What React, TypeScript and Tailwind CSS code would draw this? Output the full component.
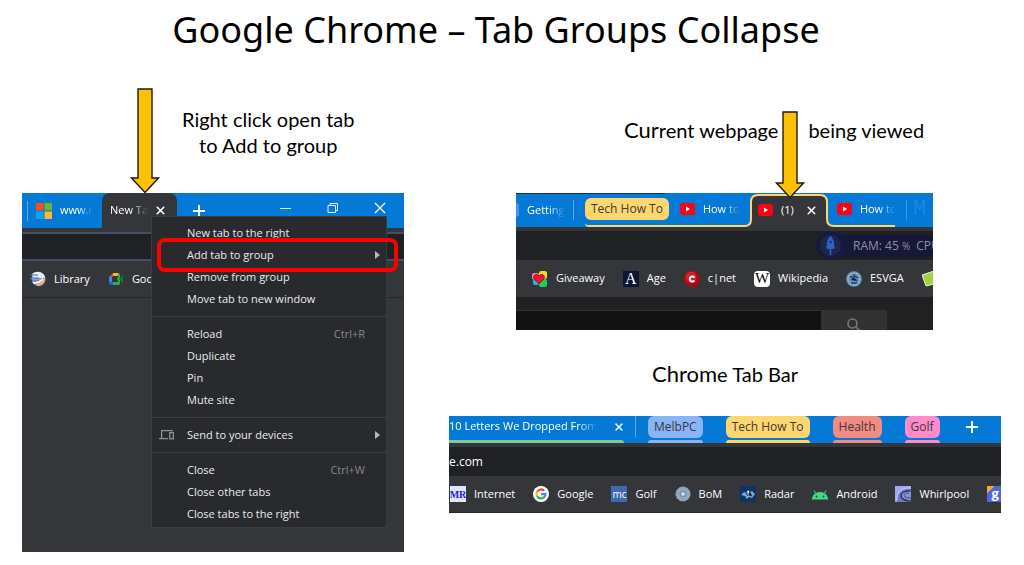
import type { ReactNode } from 'react';
import { X } from 'lucide-react';

const SHORTCUTS: Record<string, string> = { Reload: 'Ctrl+R', Close: 'Ctrl+W' };

const MENU_GROUPS = [
  ['New tab to the right', 'Add tab to group', 'Remove from group', 'Move tab to new window'],
  ['Reload', 'Duplicate', 'Pin', 'Mute site'],
  ['Send to your devices'],
  ['Close', 'Close other tabs', 'Close tabs to the right'],
];

const SUBMENUS = ['Add tab to group', 'Send to your devices'];

function DownArrow({ height, className }: { height: number; className?: string }) {
  const neck = height - 16;
  return (
    <svg width="30" height={height} className={`relative z-10 shrink-0 ${className ?? ''}`} aria-hidden="true">
      <path
        d={`M8 1H22V${neck}H28.5L15 ${height - 1.5}L1.5 ${neck}H8Z`}
        fill="#ffc000"
        stroke="#1c1a10"
        strokeWidth="1.4"
      />
    </svg>
  );
}

function YouTubeIcon() {
  return (
    <svg width="15" height="12" viewBox="0 0 15 12" className="shrink-0" aria-hidden="true">
      <rect width="15" height="12" rx="3" fill="#ff0014" />
      <path d="M6 3.6L10 6L6 8.4Z" fill="#fff" />
    </svg>
  );
}

function WindowsLogo() {
  return (
    <svg width="16" height="16" className="shrink-0" aria-hidden="true">
      <path d="M0 0h7.5v7.5H0z" fill="#f25022" />
      <path d="M8.5 0H16v7.5H8.5z" fill="#6cb52c" />
      <path d="M0 8.500h7.500V16H0z" fill="#10a5ef" />
      <path d="M8.500 8.500H16V16H8.500z" fill="#ffb82e" />
    </svg>
  );
}

function PlusIcon() {
  return (
    <svg width="12" height="12" aria-hidden="true">
      <path d="M6 0V12M0 6H12" stroke="#fff" strokeWidth="2" />
    </svg>
  );
}

function LibraryIcon() {
  return (
    <svg width="16" height="16" aria-hidden="true">
      <circle cx="8.500" cy="8" r="7" fill="#8fa0c2" />
      <path d="M2 3Q5 0 10 1Q15 3 15 7H3Z" fill="#e6edf8" />
      <path d="M0 4H8M0 7H9M2 10H9" stroke="#3d75c9" strokeWidth="1.200" />
      <path d="M7 13C10 12 13 9 15 6C16 11 12 16 7 15Z" fill="#e2ad80" />
      <path d="M3 11.500Q8 13 13 8" fill="none" stroke="#fff" strokeWidth="1.600" />
    </svg>
  );
}

function MeetIcon() {
  return (
    <svg width="16" height="16" aria-hidden="true">
      <path d="M1 6L5 2V6Z" fill="#ea4335" />
      <path d="M5 2H11V5H5Z" fill="#fbbc04" />
      <path d="M1 6H4V11H1Z" fill="#4285f4" />
      <path d="M1 11H5V14H3Q1 14 1 12Z" fill="#1967d2" />
      <path d="M5 11H11V14H5Z" fill="#34a853" />
      <path d="M10 2Q12 2 12 4V12Q12 14 10 14V10L9 8L10 6Z" fill="#34a853" />
      <path d="M11 8L15 4V12Z" fill="#00832d" />
    </svg>
  );
}

function GiveawayIcon() {
  return (
    <svg width="16" height="16" aria-hidden="true">
      <rect x="7" y="0" width="8" height="8" rx="2" fill="#fbd12c" />
      <rect x="0" y="2" width="7" height="7" rx="2" fill="#ff7c9c" />
      <rect x="1" y="8" width="6" height="6" rx="2" fill="#27b6d8" />
      <rect x="7" y="8" width="8" height="8" rx="2" fill="#1bd05a" />
      <path d="M7 13L2 8C0 4 5 2 7 5C9 2 14 4 12 8Z" fill="#f5102d" stroke="#4c2512" strokeWidth=".7" />
    </svg>
  );
}

function CnetIcon() {
  return (
    <svg width="16" height="16" aria-hidden="true">
      <circle cx="8" cy="8" r="8" fill="#a70c17" />
      <circle cx="7" cy="6" r="5.500" fill="#dd1d29" />
      <path d="M10.500 6.500A2.600 2.600 0 1 0 10.500 9.500" fill="none" stroke="#fff" strokeWidth="2" />
    </svg>
  );
}

function EsvgaIcon() {
  return (
    <svg width="16" height="16" aria-hidden="true">
      <circle cx="8" cy="8" r="7.800" fill="#7196bd" />
      <circle cx="8" cy="8" r="6" fill="none" stroke="#c0d4e6" strokeWidth="1" strokeDasharray="1.500 1.500" />
      <path d="M4 6H7M9 5L12 7M5 9L8 7L11 10M5 12H11M8 3V8" stroke="#183d6b" strokeWidth="1.400" />
    </svg>
  );
}

function GoogleIcon() {
  return (
    <svg width="16" height="16" aria-hidden="true">
      <circle cx="8" cy="8" r="8" fill="#fff" />
      <g fill="none" strokeWidth="2.200">
        <path d="M11.200 4.800A4.500 4.500 0 0 0 4.100 5.750" stroke="#ea4335" />
        <path d="M4.100 5.750A4.500 4.500 0 0 0 4.100 10.250" stroke="#fbbc04" />
        <path d="M4.100 10.250A4.500 4.500 0 0 0 10.900 11.400" stroke="#34a853" />
        <path d="M10.900 11.400A4.500 4.500 0 0 0 12.500 8.200H8" stroke="#4285f4" />
      </g>
    </svg>
  );
}

function BomIcon() {
  return (
    <svg width="16" height="16" aria-hidden="true">
      <circle cx="8" cy="8" r="7" fill="#8fa8bf" />
      <circle cx="8" cy="8" r="7" fill="none" stroke="#a4b7c8" strokeWidth="1" strokeDasharray="3 1" />
      <circle cx="8" cy="8" r="3" fill="#a9bac8" stroke="#70899f" />
      <circle cx="8" cy="8" r="1" fill="#f2f5f7" />
    </svg>
  );
}

function RadarIcon() {
  return (
    <svg width="16" height="16" aria-hidden="true">
      <rect width="16" height="16" fill="#0b3562" />
      <path d="M1 9L4 6L6 7L8 4L10 6L12 5L15 8L12 12L9 11L7 13L5 10Z" fill="#7dabcf" />
      <path d="M6 7L8 10M10 6L9 9L12 10" stroke="#0b3562" />
      <path d="M7 5L9 5L9 7Z" fill="#fff" />
    </svg>
  );
}

function AndroidIcon() {
  return (
    <svg width="16" height="16" aria-hidden="true">
      <path d="M3.500 7L2 4.500M12.500 7L14 4.500" stroke="#3ddc84" strokeWidth="1" />
      <path d="M0 13.500C0 9 3.500 6 8 6S16 9 16 13.500Z" fill="#3ddc84" />
      <circle cx="4.500" cy="10.500" r=".9" fill="#35363a" />
      <circle cx="11.500" cy="10.500" r=".9" fill="#35363a" />
    </svg>
  );
}

function WhirlpoolIcon() {
  return (
    <svg width="16" height="16" aria-hidden="true">
      <rect width="16" height="16" fill="#a3a8e6" />
      <path d="M16 3C8 2 2 6 2 16H16Z" fill="#6f77c2" />
      <path d="M16 5C9 4 4 8 7 12C9 14 12 15 16 15" fill="#8a91d4" stroke="#22295f" strokeWidth="1.200" />
      <path d="M14 7C10 7 8 9 10 11C12 12 14 12 16 12" fill="none" stroke="#3c448c" />
      <path d="M2 14C1 6 8 1 16 2" fill="none" stroke="#c5c9fb" />
    </svg>
  );
}

function LetterIcon({ children, className }: { children: ReactNode; className: string }) {
  return (
    <span className={`flex h-4 w-4 shrink-0 items-center justify-center overflow-hidden ${className}`}>
      {children}
    </span>
  );
}

function Bookmark({ icon, label }: { icon: ReactNode; label?: string }) {
  return (
    <a href="#" className="flex shrink-0 items-center gap-2 whitespace-nowrap">
      <span className="shrink-0">{icon}</span>
      {label}
    </a>
  );
}

function GroupChip({ label, className }: { label: string; className: string }) {
  return (
    <button className={`h-[22px] shrink-0 rounded-md px-[6px] text-[12px] whitespace-nowrap text-[#3c3a35] ${className}`}>
      {label}
    </button>
  );
}

function FadedLabel({ children }: { children: ReactNode }) {
  return (
    <span className="overflow-hidden whitespace-nowrap [mask-image:linear-gradient(to_right,black_55%,transparent)]">
      {children}
    </span>
  );
}

function ContextMenu() {
  return (
    <div
      role="menu"
      className="absolute top-[23px] right-[17px] left-[129px] border border-[#3b3c40] bg-[#292a2d] pt-[5px] pb-[2px]"
    >
      {MENU_GROUPS.map((group, i) => (
        <div key={group[0]} className={i > 0 ? 'mt-[6px] border-t border-[#3e3f43] pt-[6px]' : ''}>
          {group.map((item) => (
            <button
              key={item}
              role="menuitem"
              className="flex h-[22px] w-full items-center pr-[5px] pl-[7px] text-left text-[#e8eaed]"
            >
              <span className="w-[28px] shrink-0">
                {item === 'Send to your devices' && (
                  <svg width="16" height="12" fill="none" stroke="#8e9196" strokeWidth="1.300" aria-hidden="true">
                    <path d="M14 1.600H2.600V9M0 9.700H9" />
                    <rect x="10.700" y="3.600" width="3.600" height="6.200" />
                  </svg>
                )}
              </span>
              <span className="grow">{item}</span>
              {SHORTCUTS[item] && <span className="mr-4 text-[#85888c]">{SHORTCUTS[item]}</span>}
              {SUBMENUS.includes(item) && (
                <svg width="6" height="8" aria-hidden="true">
                  <path d="M0 0L5 4L0 8Z" fill="#b4b7bb" />
                </svg>
              )}
            </button>
          ))}
        </div>
      ))}
    </div>
  );
}

function MenuWindow() {
  return (
    <section className="relative overflow-hidden bg-[#35363a]">
      <div className="flex h-[35px] items-center bg-[#0479d6] text-white">
        <span className="ml-[5px] h-5 w-px shrink-0 bg-[#5ea8e4]" />
        <button className="flex w-[74px] shrink-0 items-center gap-2 px-2">
          <WindowsLogo />
          <FadedLabel>www.r</FadedLabel>
        </button>
        <div className="flex h-full w-[75px] shrink-0 items-center justify-between rounded-t-lg bg-[#35363a] pr-[10px] pl-2">
          <button className="flex w-[40px]">
            <FadedLabel>New Ta</FadedLabel>
          </button>
          <button aria-label="Close tab">
            <X size={13} strokeWidth={3} />
          </button>
        </div>
        <button className="ml-4" aria-label="New tab">
          <PlusIcon />
        </button>
        <div className="ml-auto flex items-center gap-[35px] pr-[18px] pb-[5px]">
          <button aria-label="Minimise">
            <svg width="12" height="12">
              <path d="M0 6.500H11" stroke="#d8ebf9" />
            </svg>
          </button>
          <button aria-label="Restore">
            <svg width="12" height="12" fill="none" stroke="#e8f4fc">
              <path d="M1 3.500H8.500V10.500H1Z M3 3.500V1.500H10.500V8.500H8.500" />
            </svg>
          </button>
          <button aria-label="Close window">
            <svg width="12" height="12">
              <path d="M1 1L11 11M11 1L1 11" stroke="#fff" strokeWidth="1.200" />
            </svg>
          </button>
        </div>
      </div>
      <div className="mt-[4px] h-[29px] border-y-2 border-[#43506a] bg-[#202124]" />
      <div className="flex h-[37px] items-center gap-[18px] border-b border-[#27282b] pl-2 text-white">
        <Bookmark icon={<LibraryIcon />} label="Library" />
        <Bookmark icon={<MeetIcon />} label="Goo" />
      </div>
      <div className="h-[254px]" />
      <ContextMenu />
      <div className="pointer-events-none absolute top-[45px] right-[6px] left-[135px] h-[34px] rounded-lg border-4 border-[#ff0000]" />
    </section>
  );
}

function ActiveTab() {
  return (
    <div className="relative flex h-full w-[89px] shrink-0 items-center">
      <svg width="89" height="34" className="absolute inset-0" aria-hidden="true">
        <path
          d="M0 33Q6 33 6 26V9Q6 2 13 2H75Q82 2 82 9V26Q82 33 89 33V36H0Z"
          fill="#35363a"
        />
        <path
          d="M0 33Q6 33 6 26V9Q6 2 13 2H75Q82 2 82 9V26Q82 33 89 33"
          fill="none"
          stroke="#fdd66f"
          strokeWidth="2"
        />
      </svg>
      <button className="relative flex items-center gap-2 pl-[13px]">
        <YouTubeIcon />
        (1)
      </button>
      <button className="relative ml-[11px]" aria-label="Close tab">
        <X size={13} strokeWidth={3} />
      </button>
    </div>
  );
}

function GroupWindow() {
  return (
    <section className="mr-[68px] ml-[67px] overflow-hidden bg-[#35363a] text-white">
      <div className="relative flex h-[34px] items-center bg-[#0479d6]">
        <span className="absolute top-0 left-0 h-px w-[149px] bg-[#17324d]" />
        <span className="h-[14px] w-[3px] shrink-0 rounded-r-full bg-[#4d8df6]" />
        <button className="flex w-[54px] shrink-0 pr-[7px] pl-2">
          <FadedLabel>Getting</FadedLabel>
        </button>
        <span className="h-5 w-px shrink-0 bg-[#5ea8e4]" />
        <div className="ml-[11px] flex h-full shrink-0">
          <div className="flex items-center rounded-bl-sm border-b-2 border-[#fdd66f]">
            <GroupChip label="Tech How To" className="bg-[#fdd66f]" />
          </div>
          <button className="flex w-[76px] items-center gap-2 border-b-2 border-[#fdd66f] pr-[5px] pl-[11px]">
            <YouTubeIcon />
            <FadedLabel>How to</FadedLabel>
          </button>
          <ActiveTab />
          <button className="flex w-[61px] items-center gap-2 border-b-2 border-[#fdd66f] pl-[3px]">
            <YouTubeIcon />
            <FadedLabel>How to</FadedLabel>
          </button>
        </div>
        <span className="ml-[11px] h-5 w-px shrink-0 bg-[#3f97de]" />
        <button className="ml-[6px] font-['Liberation_Mono',monospace] text-[22px] leading-6 text-[#1b86ec]">M</button>
      </div>
      <div className="mt-[4px] flex h-[29px] items-center justify-end bg-[#202124]">
        <div className="flex h-[22px] w-[117px] items-center rounded-l-full bg-[#171837] whitespace-nowrap text-[#8d8ea6]">
          <svg width="29" height="29" className="shrink-0" aria-hidden="true">
            <circle cx="14.500" cy="14.500" r="14" fill="#171a40" />
            <circle cx="14.500" cy="14.500" r="10.500" fill="#20254a" />
            <path
              d="M14.500 5C17 7.500 18.500 10 18 14L19 17L17 18H15.300V24H13.700V18H12L10 17L11 14C10.500 10 12 7.500 14.500 5Z"
              fill="#2c60cf"
            />
            <circle cx="14.500" cy="11" r="1.200" fill="#18245a" />
          </svg>
          <span className="pl-2 text-[12px]">
            RAM: 45 <span className="text-[10px]">%</span>
          </span>
          <span className="pl-[6px] text-[12px]">CPU</span>
        </div>
      </div>
      <div className="flex h-[37px] items-center gap-[18px] pl-4">
        <Bookmark icon={<GiveawayIcon />} label="Giveaway" />
        <Bookmark
          icon={<LetterIcon className="bg-[#0a1633] font-['Liberation_Serif',serif] text-[16px]">A</LetterIcon>}
          label="Age"
        />
        <Bookmark icon={<CnetIcon />} label="c|net" />
        <Bookmark
          icon={
            <LetterIcon className="rounded-sm bg-white font-['Liberation_Serif',serif] text-[15px] text-black">W</LetterIcon>
          }
          label="Wikipedia"
        />
        <Bookmark icon={<EsvgaIcon />} label="ESVGA" />
        <Bookmark
          icon={
            <svg width="16" height="16" aria-hidden="true">
              <path d="M0 4L12 0L16 12L4 15Z" fill="#a5d243" stroke="#e4f2c5" />
            </svg>
          }
        />
      </div>
      <div className="flex h-[33px] items-end bg-[#212121] pr-[46px]">
        <div className="h-5 grow border-t border-[#303030] bg-[#121212]" />
        <button className="flex h-5 w-[66px] justify-center bg-[#323232] pt-2" aria-label="Search">
          <svg width="14" height="14" fill="none" stroke="#777" strokeWidth="1.600" aria-hidden="true">
            <circle cx="5.500" cy="5.500" r="4.500" />
            <path d="M9 9L13 13" />
          </svg>
        </button>
      </div>
    </section>
  );
}

const COLLAPSED_GROUPS = [
  { label: 'MelbPC', color: 'bg-[#8ab4f8]' },
  { label: 'Tech How To', color: 'bg-[#fdd66f]' },
  { label: 'Health', color: 'bg-[#f28b82]' },
  { label: 'Golf', color: 'bg-[#ff8bcb]' },
];

function TabBarWindow() {
  return (
    <section className="overflow-hidden bg-[#35363a] text-white">
      <div className="flex h-[27px] bg-[#0479d6]">
        <div className="flex w-[175px] shrink-0 flex-col justify-between">
          <div className="flex h-[21px] items-center justify-between">
            <button className="flex">
              <span className="whitespace-nowrap [mask-image:linear-gradient(to_right,black_88%,transparent)]">
                10 Letters We Dropped From
              </span>
            </button>
            <button aria-label="Close tab" className="-mr-px">
              <X size={12} strokeWidth={3} />
            </button>
          </div>
          <span className="h-[3px] rounded-tr-full bg-[#81c995]" />
        </div>
        <span className="ml-[11px] h-[21px] w-px shrink-0 bg-[#5ea8e4]" />
        <div className="ml-3 flex gap-[23px]">
          {COLLAPSED_GROUPS.map(({ label, color }) => (
            <div key={label} className="flex flex-col justify-between">
              <GroupChip label={label} className={color} />
              <span className={`h-[3px] rounded-t-full ${color}`} />
            </div>
          ))}
        </div>
        <button className="mb-[6px] ml-[26px]" aria-label="New tab">
          <PlusIcon />
        </button>
      </div>
      <label className="mt-[4px] flex h-[29px] items-center bg-[#202124]">
        <input aria-label="Address" defaultValue="e.com" className="w-full bg-transparent text-[12px] outline-none" />
      </label>
      <div className="flex h-[37px] items-center gap-[18px] border-b border-[#27282b] pl-px">
        <Bookmark
          icon={
            <LetterIcon className="bg-[#e4e4ff] font-['Liberation_Serif',serif] text-[10px] font-bold text-[#1b1bea]">
              MR
            </LetterIcon>
          }
          label="Internet"
        />
        <Bookmark icon={<GoogleIcon />} label="Google" />
        <Bookmark icon={<LetterIcon className="bg-[#3d6ab2] text-[10px]">mc</LetterIcon>} label="Golf" />
        <Bookmark icon={<BomIcon />} label="BoM" />
        <Bookmark icon={<RadarIcon />} label="Radar" />
        <Bookmark icon={<AndroidIcon />} label="Android" />
        <Bookmark icon={<WhirlpoolIcon />} label="Whirlpool" />
        <Bookmark
          icon={
            <LetterIcon className="bg-linear-135 from-[#f8a829] from-25% to-[#5068dc] to-25% text-[13px] font-bold">g</LetterIcon>
          }
        />
      </div>
    </section>
  );
}

export default function App() {
  return (
    <div className="min-h-screen bg-white font-['Open_Sans',sans-serif] text-[11px] font-medium text-black">
      <h1 className="pr-8 text-center font-['Noto_Sans',sans-serif] text-[36px] leading-[60px] font-normal">
        Google Chrome – Tab Groups Collapse
      </h1>
      <main className="grid grid-cols-[minmax(0,382fr)_minmax(0,552fr)] items-start gap-[45px] pt-7 pr-[23px] pb-[13px] pl-[22px]">
        <div>
          <div className="flex h-[105px] gap-[22px] pl-[108px]">
            <DownArrow height={106} />
            <p className="pt-[18px] text-center font-['Lato',sans-serif] text-[20px] leading-[26px] font-normal">
              Right click open tab
              <br />
              to Add to group
            </p>
          </div>
          <MenuWindow />
        </div>
        <div>
          <div className="flex h-[105px] pt-[23px] pl-[175px] font-['Lato',sans-serif] text-[20px] leading-[38px] font-normal whitespace-nowrap">
            <p>
              <span className="text-[22px]">Cur</span>rent webpage
            </p>
            <DownArrow height={88} className="-mx-[3px]" />
            <p className="pl-[6px]">being viewed</p>
          </div>
          <GroupWindow />
          <p className="flex h-[86px] items-center justify-center font-['Lato',sans-serif] text-[20px] font-normal">
            <span>
              <span className="text-[22px]">Chrom</span>e Tab Bar
            </span>
          </p>
          <TabBarWindow />
        </div>
      </main>
    </div>
  );
}
